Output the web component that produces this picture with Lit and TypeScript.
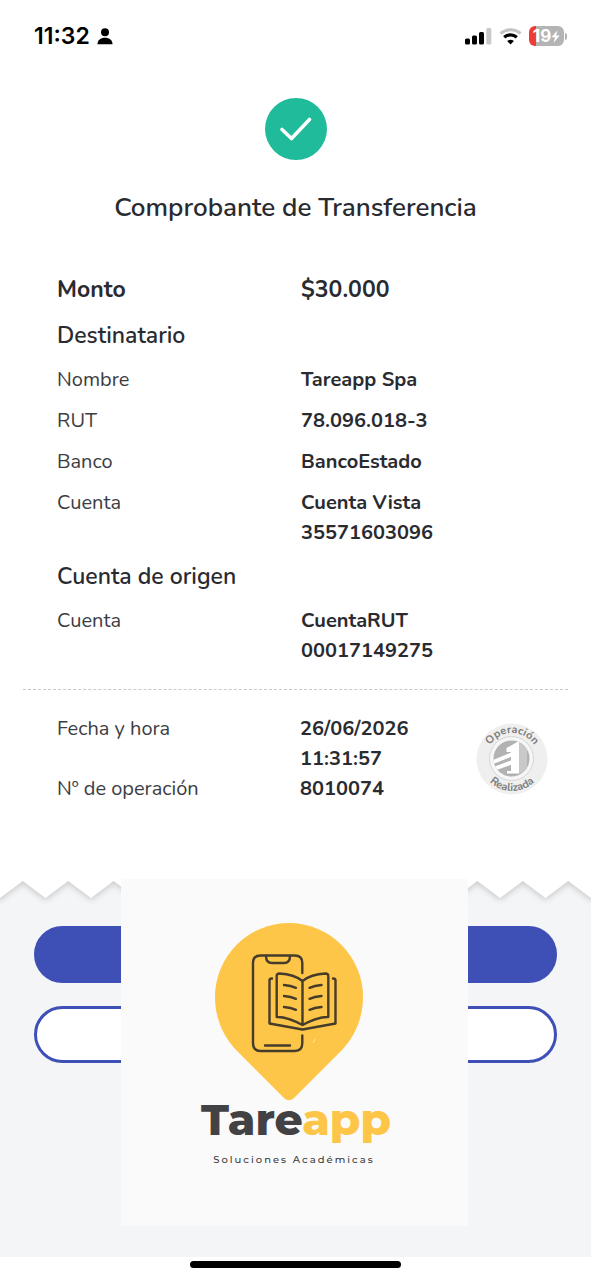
import { LitElement, html, css, svg } from "lit";
import { customElement, property } from "lit/decorators.js";

interface Entry {
  label: string;
  lines: string[];
}

const RECIPIENT: Entry[] = [
  { label: "Nombre", lines: ["Tareapp Spa"] },
  { label: "RUT", lines: ["78.096.018-3"] },
  { label: "Banco", lines: ["BancoEstado"] },
  { label: "Cuenta", lines: ["Cuenta Vista", "35571603096"] },
];

const ORIGIN: Entry[] = [{ label: "Cuenta", lines: ["CuentaRUT", "00017149275"] }];

@customElement("status-bar")
class StatusBar extends LitElement {
  static styles = css`
    :host {
      display: flex;
      align-items: center;
      justify-content: space-between;
      height: 72px;
      padding: 0 24px 0 34px;
      box-sizing: border-box;
      font-family: Inter, "Liberation Sans", sans-serif;
      color: #000;
    }
    .group {
      display: flex;
      align-items: center;
      gap: 7px;
    }
    .time {
      font-size: 23px;
      line-height: 28px;
      font-weight: 600;
    }
    .battery {
      display: flex;
      align-items: center;
      gap: 1px;
    }
    .cell {
      display: flex;
      align-items: center;
      justify-content: center;
      width: 35px;
      height: 20px;
      border-radius: 6px;
      background: linear-gradient(90deg, #ee3b35 7px, #b4b4b4 7px);
      color: #fff;
      font-size: 17px;
      line-height: 20px;
      font-weight: 700;
    }
    .cap {
      width: 2px;
      height: 7px;
      border-radius: 0 2px 2px 0;
      background: #b4b4b4;
    }
    svg {
      display: block;
    }
  `;

  render() {
    return html`
      <div class="group">
        <span class="time">11:32</span>
        <svg width="16" height="17" viewBox="0 0 16 17" aria-hidden="true">
          <circle cx="8" cy="4.3" r="4" />
          <path d="M.5 16.3C.5 12 3.600 9.700 8 9.700s7.500 2.300 7.500 6.600z" />
        </svg>
      </div>
      <div class="group">
        <svg width="27" height="17" viewBox="0 0 27 17" aria-hidden="true">
          <rect x="0" y="10.500" width="5" height="6" rx="1.500" />
          <rect x="7" y="7.500" width="5" height="9" rx="1.500" />
          <rect x="14" y="4" width="5" height="12.500" rx="1.500" />
          <rect x="21.300" y="0" width="5" height="16.500" rx="1.500" fill="#c8c8c8" />
        </svg>
        <svg width="23" height="17" viewBox="0 0 23 17" aria-hidden="true">
          <path d="M1.500 5.500C7.300.400 15.700.400 21.500 5.500" fill="none" stroke="#c4c4c4" stroke-width="3" />
          <path d="M5.200 9.300c3.700-3.200 8.900-3.200 12.600 0" fill="none" stroke="#000" stroke-width="3.200" />
          <path d="M11.500 16.500l-3.400-3.600c2-1.700 4.800-1.700 6.800 0z" />
        </svg>
        <div class="battery">
          <div class="cell">
            <span>19</span>
            <svg width="9" height="13" viewBox="0 0 9 13" aria-hidden="true">
              <path d="M6.500.3.400 7.300h3.500L2.600 12.700 8.700 5.500H5.200z" fill="#fff" />
            </svg>
          </div>
          <div class="cap"></div>
        </div>
      </div>
    `;
  }
}

@customElement("entry-list")
class EntryList extends LitElement {
  @property({ attribute: false }) entries: Entry[] = [];

  static styles = css`
    :host {
      display: block;
    }
    dl {
      display: flex;
      flex-direction: column;
      gap: 11px;
      margin: 0;
      font-size: 20px;
      line-height: 30px;
    }
    .row {
      display: grid;
      grid-template-columns: 1fr 1fr;
    }
    dt {
      color: #3c3d42;
    }
    dd {
      margin: 0;
      font-weight: 700;
      color: #2a2b30;
    }
    .line {
      display: block;
    }
  `;

  render() {
    return html`<dl>
      ${this.entries.map(
        (e) => html`<div class="row">
          <dt>${e.label}</dt>
          <dd>${e.lines.map((l) => html`<span class="line">${l}</span>`)}</dd>
        </div>`
      )}
    </dl>`;
  }
}

@customElement("operation-seal")
class OperationSeal extends LitElement {
  static styles = css`
    :host {
      display: block;
    }
    svg {
      display: block;
      width: 72px;
      height: 72px;
      overflow: visible;
    }
    .ring {
      font-family: Nunito, "Noto Sans", sans-serif;
      font-size: 11px;
      font-weight: 700;
      fill: #7d7d7d;
    }
  `;

  render() {
    return html`<svg viewBox="0 0 72 72" role="img" aria-label="Operación Realizada">
      <defs>
        <path id="upper" d="M10 36a26 26 0 0 1 52 0" />
        <path id="lower" d="M3.500 35.500a32.500 32.500 0 0 0 65 0" />
        <clipPath id="disc"><circle cx="35.500" cy="35.500" r="18" /></clipPath>
      </defs>
      <circle cx="36" cy="36" r="35.500" fill="#efefef" />
      <circle cx="35.500" cy="35.500" r="22" fill="#f6f6f6" stroke="#d6d6d6" stroke-width="1" />
      <g clip-path="url(#disc)">
        <rect x="16" y="16" width="40" height="40" fill="#b2b2b2" />
        <path d="M43 17l8 6v27h-8z" fill="#c9c9c9" />
        <path d="M30.500 25L43 18v32.500H31V48h4V29h-4.500z" fill="#fff" />
        <path d="M16 37.500l19-8v4.300L16 41.500z" fill="#fff" />
        <path d="M16 44.500l19-7v4.300L16 48.500z" fill="#fff" />
      </g>
      <text class="ring" text-anchor="middle">
        <textPath href="#upper" startOffset="50%">Operación</textPath>
      </text>
      <text class="ring" text-anchor="middle">
        <textPath href="#lower" startOffset="50%">Realizada</textPath>
      </text>
    </svg>`;
  }
}

@customElement("brand-card")
class BrandCard extends LitElement {
  static styles = css`
    :host {
      display: flex;
      flex-direction: column;
      align-items: center;
      box-sizing: border-box;
      padding-top: 44px;
      background: #fafafa;
    }
    .pin {
      display: block;
      width: 148px;
      height: 178px;
      margin-right: 10px;
    }
    .name {
      font-family: Montserrat, Inter, "Liberation Sans", sans-serif;
      font-size: 44px;
      line-height: 36px;
      font-weight: 800;
      color: #424143;
      padding-left: 4px;
    }
    .accent {
      color: #fec648;
    }
    .tagline {
      font-family: Montserrat, Inter, "Liberation Sans", sans-serif;
      font-size: 10px;
      line-height: 16px;
      font-weight: 500;
      margin-top: 15px;
      letter-spacing: 2px;
      color: #3c3b3d;
    }
  `;

  render() {
    return html`
      <svg class="pin" viewBox="0 0 148 178" aria-hidden="true">
        <path
          fill="#fec648"
          d="M74 0A74 74 0 0 0 0 74c0 21 8 39 21 53l48 48q5 4.500 10 0l48-48c13-14 21-32 21-53A74 74 0 0 0 74 0z"
        />
        <g fill="none" stroke="#453c2b" stroke-width="2.400" stroke-linecap="round" stroke-linejoin="round">
          <path d="M87.300 50V40q0-7.500-7.500-7.500H45.500q-7.500 0-7.500 7.500v80q0 8 7.500 8h34.300q7.500 0 7.500-8v-7.500" />
          <path d="M51 33q0 7 6 7h12q6 0 6-7M50 122.500h25" />
          <path d="M57 55.500q-2.500 0-2.500 2v43l33 6 33-6v-43q0-2-2.500-2" />
          <path d="M87.500 58c-5-4-14-7-23-7.500q-2.800 0-2.800 2.500v41q10-.5 25.800 8 15.800-8.500 25.800-8V53q0-2.500-2.800-2.500c-9 .5-18 3.500-23 7.500zv44" />
          <path d="M69 62q7 .5 12 2.800M69 73q7 .5 12 2.800M69 84q7 .5 12 2.800M94.500 64.800q5-2.300 12-2.800M94.500 75.800q5-2.300 12-2.800M94.500 86.800q5-2.300 12-2.800" />
        </g>
        <path d="M100 116l-2 4" stroke="#ffe7a8" stroke-width="1" />
      </svg>
      <div class="name">Tare<span class="accent">app</span></div>
      <div class="tagline">Soluciones Académicas</div>
    `;
  }
}

@customElement("app-root")
class AppRoot extends LitElement {
  static styles = css`
    :host {
      display: flex;
      flex-direction: column;
      min-height: 100vh;
      background: #fff;
      font-family: "Nunito", "Noto Sans", sans-serif;
      color: #2a2b30;
    }
    .receipt {
      display: flex;
      flex-direction: column;
      padding-top: 26px;
    }
    .check {
      align-self: center;
      width: 62px;
      height: 62px;
    }
    h1 {
      margin: 30px 0 0;
      text-align: center;
      font-size: 26px;
      line-height: 36px;
      font-weight: 600;
    }
    .details {
      display: flex;
      flex-direction: column;
      gap: 14px;
      padding: 49px 46px 23px 57px;
    }
    .amount {
      display: grid;
      grid-template-columns: 1fr 1fr;
      margin-bottom: 2px;
      font-size: 23px;
      line-height: 30px;
      font-weight: 700;
    }
    h2 {
      margin: 0;
      font-size: 23px;
      line-height: 30px;
      font-weight: 600;
    }
    .divider {
      width: auto;
      margin: 0 23px;
      border: 0;
      border-top: 1px dashed #c9c9cb;
    }
    .operation {
      display: flex;
      align-items: center;
      padding: 24px 43px 77px 57px;
    }
    .facts {
      flex: 1;
      display: grid;
      grid-template-columns: 58% 1fr;
      margin: 0;
      font-size: 20px;
      line-height: 30px;
    }
    .facts dt {
      color: #3c3d42;
    }
    .facts dd {
      margin: 0;
      font-weight: 700;
    }
    .line {
      display: block;
    }
    .actions {
      flex: 1;
      position: relative;
      display: flex;
      flex-direction: column;
      gap: 23px;
      background: #f3f5f7;
    }
    .edge {
      display: block;
      width: 100%;
      height: 22px;
      overflow: visible;
      filter: drop-shadow(0 2px 3px rgba(0, 0, 0, 0.18));
      clip-path: inset(0 0 -8px 0);
    }
    .button {
      margin: 0 34px;
      height: 57px;
      box-sizing: border-box;
      border: 3px solid #3e4fb5;
      border-radius: 29px;
      background: #fff;
    }
    .primary {
      background: #3e4fb5;
    }
    .brand {
      position: absolute;
      top: -2px;
      left: 50%;
      width: 347px;
      height: 347px;
      margin-left: -175px;
    }
    .home {
      display: flex;
      justify-content: center;
      padding: 4px 0 12px;
    }
    .handle {
      width: 211px;
      height: 7px;
      border-radius: 4px;
      background: #000;
    }
  `;

  private renderEdge() {
    const step = 591 / 26;
    const points = Array.from({ length: 27 }, (_, i) => `${(i * step).toFixed(2)},${i % 2 ? 0 : 17}`);
    return svg`<polygon points="-6,-12 -6,17 ${points.join(" ")} 597,17 597,-12" fill="#fff" />`;
  }

  render() {
    return html`
      <status-bar></status-bar>
      <main class="receipt">
        <svg class="check" viewBox="0 0 62 62" aria-hidden="true">
          <circle cx="31" cy="31" r="31" fill="#1fbb9b" />
          <path d="M17 31.500L26.500 40.500 44.500 21.500" fill="none" stroke="#fff" stroke-width="3.600" stroke-linecap="round" stroke-linejoin="round" />
        </svg>
        <h1>Comprobante de Transferencia</h1>
        <section class="details">
          <div class="amount"><span>Monto</span><span>$30.000</span></div>
          <h2>Destinatario</h2>
          <entry-list .entries=${RECIPIENT}></entry-list>
          <h2>Cuenta de origen</h2>
          <entry-list .entries=${ORIGIN}></entry-list>
        </section>
        <hr class="divider" />
        <section class="operation">
          <dl class="facts">
            <dt>Fecha y hora</dt>
            <dd><span class="line">26/06/2026</span><span class="line">11:31:57</span></dd>
            <dt>Nº de operación</dt>
            <dd>8010074</dd>
          </dl>
          <operation-seal></operation-seal>
        </section>
      </main>
      <section class="actions">
        <svg class="edge" viewBox="0 0 591 22" preserveAspectRatio="none" aria-hidden="true">${this.renderEdge()}</svg>
        <button class="button primary" type="button" aria-label="Compartir"></button>
        <button class="button" type="button" aria-label="Volver"></button>
        <brand-card class="brand"></brand-card>
      </section>
      <div class="home"><div class="handle"></div></div>
    `;
  }
}
